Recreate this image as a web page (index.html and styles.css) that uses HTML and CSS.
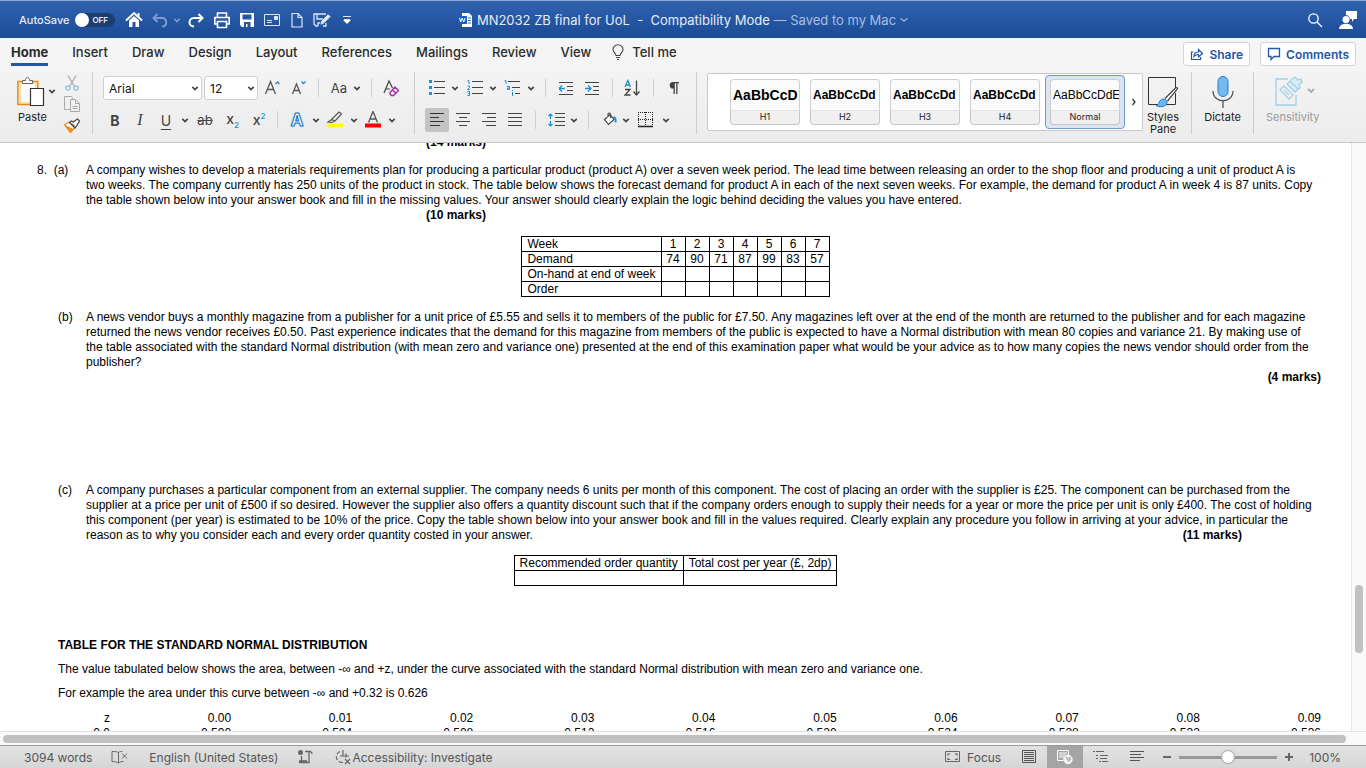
FILE: index.html
```html
<!DOCTYPE html>
<html lang="en">
<head>
    <meta charset="UTF-8">
    <meta name="viewport" content="width=device-width, initial-scale=1.0">
    <title>MN2032 ZB final for UoL</title>
    <link rel="stylesheet" href="styles.css">
</head>
<body>
    <svg class="defs" aria-hidden="true">
        <symbol id="chev" viewBox="0 0 8 8"><path d="M1.3 2.8 4 5.500 6.700 2.800" fill="none" stroke="currentColor" stroke-width="1.700"/></symbol>
    </svg>

    <!-- Title bar -->
    <header class="titlebar">
        <div class="quick">
            <label class="autosave">AutoSave <input type="checkbox" class="switch"><span class="track">OFF</span></label>
            <div class="quick-icons">
                <button aria-label="Home"><svg width="18" height="18" fill="none" stroke="#fff" stroke-width="2"><path d="M1 9.500 9 2l8 7.500M13.500 2v4"/><path d="M4 9.500 9 5l5 4.500V16h-3.500v-5h-3v5H4z" fill="#fff" stroke="none"/></svg></button>
                <button aria-label="Undo"><svg width="18" height="18" fill="none" stroke="#7d9bd0" stroke-width="2"><path d="M6.500 3 2.500 7l4 4M3 7h8.500c5 0 5 8.500-.5 8.500"/></svg></button>
                <button class="dim" aria-label="Undo list"><svg width="8" height="8"><use href="#chev"/></svg></button>
                <button aria-label="Redo"><svg width="18" height="18" fill="none" stroke="#fff" stroke-width="2"><path d="M11.500 3l4 4-4 4M15 7H7C1 7 1 15.500 7 15.500"/></svg></button>
                <button aria-label="Print"><svg width="18" height="18" fill="none" stroke="#fff" stroke-width="1.600"><path d="M4.500 6V2h9v4M4 13H1.800V6.500h14.400V13H14M4.500 10.500h9v6h-9z"/></svg></button>
                <button aria-label="Save"><svg width="18" height="18"><path d="M2 2h14v14H4l-2-2z" fill="#fff"/><path d="M4.500 3.500h9v5h-9zM6 11h6.500v5H9.500v-3H8v3H6z" fill="#2655a2"/></svg></button>
                <button aria-label="Mail"><svg width="18" height="18" fill="none" stroke="#dfe7f5"><path d="M1.500 3.500h15v11h-15zM4 9.500h5M4 11.500h5"/><path d="M11.500 5.500h3v3h-3z" fill="#dfe7f5"/></svg></button>
                <button aria-label="New"><svg width="18" height="18" fill="none" stroke="#dfe7f5" stroke-width="1.200"><path d="M4 2.500h6l4 4v9.500H4zM10 2.500v4h4"/></svg></button>
                <button aria-label="Edit"><svg width="20" height="18" fill="none" stroke="#dfe7f5" stroke-width="1.300"><path d="M14 3H2v10l2 2h2M5 3v5h6M6 15v-3h2M14 12v3h-3"/><path d="m8 14 1-4 7-7 3 2.500-7.500 7.500z" fill="#dfe7f5" stroke="#2655a2" stroke-width=".6"/></svg></button>
                <button aria-label="Customize"><svg width="8" height="10"><path d="M0 1.500h8M1 4.500h6" stroke="#dfe7f5"/><path d="M0 5h8L4 9z" fill="#fff"/></svg></button>
            </div>
        </div>
        <div class="doc-title">
            <svg width="15" height="16"><path d="M4 1h7l3 3v11H4z" fill="#fff"/><path d="M10 6h3M10 8.500h3M10 11h3" stroke="#2f6fc4"/><path d="M0 4h9v8H0z" fill="#1b5fbd"/><path d="m1.500 6 1.200 4 1.500-4 1.500 4L7.200 6" fill="none" stroke="#fff"/></svg>
            <span>MN2032 ZB final for UoL&nbsp; -&nbsp; Compatibility Mode <span class="saved">— Saved to my Mac</span></span>
            <svg class="saved" width="8" height="8" viewBox="0 0 8 8"><path d="M.5 2.500 4 5l3.500-2.500" fill="none" stroke="currentColor" stroke-width="1.300"/></svg>
        </div>
        <div class="title-right">
            <button aria-label="Search"><svg width="16" height="16" fill="none" stroke="#fff" stroke-width="1.300"><circle cx="6.500" cy="6.500" r="4.700"/><path d="m10 10 5 5"/></svg></button>
            <button aria-label="Account"><svg width="20" height="20" fill="#fff"><path d="M8 1h11v8h-3l-2 3V9h-2a4.500 4.500 0 0 0-4-4z"/><circle cx="8" cy="9.500" r="3.500"/><path d="M1 19c0-7 14-7 14 0z"/></svg></button>
        </div>
    </header>

    <!-- Tabs -->
    <div class="tabbar">
        <nav class="tabs">
            <a href="#" class="active">Home</a>
            <a href="#">Insert</a>
            <a href="#">Draw</a>
            <a href="#">Design</a>
            <a href="#">Layout</a>
            <a href="#">References</a>
            <a href="#">Mailings</a>
            <a href="#">Review</a>
            <a href="#">View</a>
            <a href="#" class="tell"><svg width="12" height="16" fill="none" stroke="#444" stroke-width="1.100"><path d="M4 11.500c0-2.500-3-3-3-6a5 4.700 0 0 1 10 0c0 3-3 3.500-3 6zM4 13.500h4M5 15.500h2"/></svg>Tell me</a>
        </nav>
        <div class="tab-actions">
            <button><svg width="14" height="14" fill="none" stroke="#2456a6" stroke-width="1.200"><path d="M3.500 5H1.500v7.500h9V10"/><path d="M4 9.500c0-3.500 2-4.500 4.500-4.500V2.500L12.500 6.500 8.500 10V7.500C6.500 7.500 5 8 4 9.500z"/></svg>Share</button>
            <button><svg width="14" height="14" fill="none" stroke="#2456a6" stroke-width="1.300"><path d="M1.500 1.500h11v8H7l-3 3v-3H1.500z"/></svg>Comments</button>
        </div>
    </div>

    <!-- Ribbon -->
    <div class="ribbon">
        <div class="group clipboard">
            <button class="big paste">
                <svg width="28" height="32" fill="none"><path d="M.8 5.500h20v23h-20z" fill="#fde3a7" stroke="#f08a1d" stroke-width="1.500"/><path d="M4 8h14v18H4z" fill="#fbfbfb"/><path d="M5.500 7.500v-3h3c0-4 4-4 4 0h3v3z" fill="#fff" stroke="#666"/><path d="M13.500 12.500h13v17h-13z" fill="#fff" stroke="#333" stroke-width="1.200"/></svg>
                <span>Paste</span>
            </button>
            <button class="paste-more" aria-label="Paste options"><svg width="8" height="8"><use href="#chev"/></svg></button>
            <div class="clip-tools">
                <button aria-label="Cut"><svg width="16" height="18" fill="none" stroke="#aaa" stroke-width="1.200"><path d="M4 1.500l6.500 11M12 1.500l-6.500 11"/><circle cx="4" cy="14" r="2.200" stroke="#86bfe6"/><circle cx="12" cy="14" r="2.200" stroke="#86bfe6"/></svg></button>
                <button aria-label="Copy"><svg width="18" height="18" fill="none" stroke="#aaa"><path d="M7 14.500H1.500v-13h7L10 4"/><path d="M7.500 4.500h5l4 4v8h-9zM12.500 4.500v4h4M9.500 11.500h5M9.500 13.500h5"/></svg></button>
                <button aria-label="Format painter"><svg width="18" height="18" fill="none"><path d="M1.500 8.500 7 6l5 5.500-4.500 5z" fill="#fff" stroke="#f08a1d" stroke-width="1.300"/><path d="m2 9 8.500 4-3 3.500z" fill="#f08a1d"/><path d="m6.500 6.500 5.500 5.500 1.500-2 3-5-2-2-4.500 3L8.500 5z" fill="#fff" stroke="#444" stroke-width="1.200"/><path d="m9 7.500 3 3" stroke="#444"/></svg></button>
            </div>
        </div>

        <div class="group font">
            <div class="row font-row1">
                <label class="combo"><select aria-label="Font"><option>Arial</option></select><svg width="8" height="8"><use href="#chev"/></svg></label>
                <label class="combo"><select aria-label="Font size"><option>12</option></select><svg width="8" height="8"><use href="#chev"/></svg></label>
                <button aria-label="Grow font"><svg width="18" height="18" fill="none" stroke="#555" stroke-width="1.300"><path d="M1.500 15 6.500 2.500 11.500 15M3 10.500h7"/><path d="M11.500 5 13.500 3l2 2" stroke="#1e8fd0"/></svg></button>
                <button aria-label="Shrink font"><svg width="18" height="18" fill="none" stroke="#555" stroke-width="1.300"><path d="M2.500 15 6.500 5l4 10M4 11.500h5"/><path d="m11.500 2.500 2 2 2-2" stroke="#1e8fd0"/></svg></button>
                <i class="sep"></i>
                <button class="case">Aa</button>
                <button aria-label="Case options"><svg width="8" height="8"><use href="#chev"/></svg></button>
                <i class="sep"></i>
                <button aria-label="Clear formatting"><svg width="18" height="18" fill="none" stroke="#444" stroke-width="1.200"><path d="M2 14 7 2l3.500 7M3.500 10h4.500"/><path d="m8 13.500 5-5.500 3.500 3.500-5 5H9.500L8 15zM10.500 11l3.500 3.500" stroke="#a32fa8" stroke-width="1.400"/></svg></button>
            </div>
            <div class="row font-row2">
                <button><b>B</b></button>
                <button class="italic">I</button>
                <button class="underline">U</button>
                <button aria-label="Underline options"><svg width="8" height="8"><use href="#chev"/></svg></button>
                <button class="strike">ab</button>
                <button class="script">x<sub>2</sub></button>
                <button class="script">x<sup>2</sup></button>
                <i class="sep"></i>
                <button class="effects">A</button>
                <button aria-label="Effects options"><svg width="8" height="8"><use href="#chev"/></svg></button>
                <button aria-label="Highlight"><svg width="18" height="18" fill="none" stroke="#555"><path d="m2 11 3-2 8-8 2.500 2L9 10l-3 1.500zM5.500 8 9 10.500" stroke-width="1.200"/><path d="M1 14.500h16" stroke="#ff0" stroke-width="4"/></svg></button>
                <button aria-label="Highlight options"><svg width="8" height="8"><use href="#chev"/></svg></button>
                <button aria-label="Font color"><svg width="18" height="18" fill="none" stroke="#555" stroke-width="1.300"><path d="M4.500 11.500 9 .5l4.500 11M6 8h6"/><path d="M1 14.500h16" stroke="#f00" stroke-width="4"/></svg></button>
                <button aria-label="Color options"><svg width="8" height="8"><use href="#chev"/></svg></button>
            </div>
        </div>

        <div class="group para">
            <div class="row para-row1">
                <button aria-label="Bullets"><svg width="16" height="16"><path d="M0 0h3v3H0zM0 6h3v3H0zM0 12h3v3H0z" fill="#1e8fd0"/><path d="M5 1.500h11M5 7.500h11M5 13.500h11" stroke="#444"/></svg></button>
                <button aria-label="Bullet options"><svg width="8" height="8"><use href="#chev"/></svg></button>
                <button aria-label="Numbering"><svg width="16" height="16" fill="none" stroke="#1e8fd0"><path d="M.5 1 2 .5V4M.5 6h2v1.500L.5 9.500H3M.5 11.500h2v4h-2M1 13.500h1.500"/><path d="M5 1.500h11M5 7.500h11M5 13.500h11" stroke="#444"/></svg></button>
                <button aria-label="Numbering options"><svg width="8" height="8"><use href="#chev"/></svg></button>
                <button aria-label="Multilevel list"><svg width="16" height="16" fill="none" stroke="#1e8fd0"><path d="M.5 1 2 .5V4M3 6.500h2.500v3H3.500V8h2M8.500 10v1M8.500 12v4"/><path d="M4 1.500h12M8 7.500h8M11 13.500h5" stroke="#444"/></svg></button>
                <button aria-label="Multilevel options"><svg width="8" height="8"><use href="#chev"/></svg></button>
                <i class="sep"></i>
                <button aria-label="Decrease indent"><svg width="14" height="14" fill="none" stroke="#444"><path d="M0 1.500h14M8 5.500h6M8 9.500h6M0 13.500h14"/><path d="M0 7.500h6M3 4.500l-3 3 3 3" stroke="#1e8fd0" stroke-width="1.300"/></svg></button>
                <button aria-label="Increase indent"><svg width="14" height="14" fill="none" stroke="#444"><path d="M0 1.500h14M8 5.500h6M8 9.500h6M0 13.500h14"/><path d="M0 7.500h6M3 4.500l3 3-3 3" stroke="#1e8fd0" stroke-width="1.300"/></svg></button>
                <i class="sep"></i>
                <button aria-label="Sort"><svg width="16" height="18" fill="none" stroke="#444" stroke-width="1.300"><path d="M1 8 3.800 1.500 6.500 8M2 6h4" stroke="#1e8fd0"/><path d="M1 10.500h5L1 16h5.500M12.500 1.500V16M9.500 12.500l3 3.500 3-3.500"/></svg></button>
                <i class="sep"></i>
                <button class="pilcrow" aria-label="Show marks"><svg width="12" height="14"><path d="M4.500 1H11v1.300H9.500V13H8.200V2.300H6.800V13H5.500V7.500a3.250 3.250 0 0 1-1-6.500z" fill="#444"/></svg></button>
            </div>
            <div class="row para-row2">
                <button class="on" aria-label="Align left"><svg width="14" height="14" stroke="#333"><path d="M0 .5h14M0 4.500h9M0 8.500h14M0 12.500h10"/></svg></button>
                <button aria-label="Align center"><svg width="14" height="14" stroke="#444"><path d="M0 .5h14M3 4.500h8M0 8.500h14M3 12.500h8"/></svg></button>
                <button aria-label="Align right"><svg width="14" height="14" stroke="#444"><path d="M0 .5h14M5 4.500h9M0 8.500h14M4 12.500h10"/></svg></button>
                <button aria-label="Justify"><svg width="14" height="14" stroke="#444"><path d="M0 .5h14M0 4.500h14M0 8.500h14M0 12.500h14"/></svg></button>
                <i class="sep"></i>
                <button aria-label="Line spacing"><svg width="17" height="14" fill="none" stroke="#444"><path d="M7 .5h10M7 4.500h10M7 8.500h10M7 12.500h10"/><path d="M2.500 1v5M.5 3l2-2 2 2M2.500 8v5M.5 11l2 2 2-2" stroke="#1e8fd0" stroke-width="1.200"/></svg></button>
                <button aria-label="Spacing options"><svg width="8" height="8"><use href="#chev"/></svg></button>
                <i class="sep"></i>
                <button aria-label="Shading"><svg width="16" height="16" fill="none" stroke="#444" stroke-width="1.200"><path d="M2.500 7.500 8 2.500l4 5-5.500 5zM6 5V2.500C6 .5 8.500.5 8.500 2.500V6" fill="#fff"/><path d="M11.500 5c2 .5 2.500 2 2 5.500" stroke="#1e8fd0" stroke-width="2"/></svg></button>
                <button aria-label="Shading options"><svg width="8" height="8"><use href="#chev"/></svg></button>
                <button aria-label="Borders"><svg width="16" height="16" fill="none" stroke="#222"><path d="M0 .5h15M0 7.500h15M.5 0v14M7.500 0v14M14.500 0v14" stroke-dasharray="1 1"/><path d="M0 14.500h15" stroke-width="1.500"/></svg></button>
                <button aria-label="Border options"><svg width="8" height="8"><use href="#chev"/></svg></button>
            </div>
        </div>

        <div class="group styles-group">
            <div class="gallery">
                <button class="style h1"><span>AaBbCcD</span><small>H1</small></button>
                <button class="style"><span>AaBbCcDd</span><small>H2</small></button>
                <button class="style"><span>AaBbCcDd</span><small>H3</small></button>
                <button class="style"><span>AaBbCcDd</span><small>H4</small></button>
                <button class="style normal"><span>AaBbCcDdE</span><small>Normal</small></button>
                <button class="more" aria-label="More styles"><svg width="6" height="8"><path d="m1.500 1 2.500 3-2.500 3" fill="none" stroke="#333" stroke-width="1.300"/></svg></button>
            </div>
            <button class="big pane">
                <svg width="32" height="32" fill="none"><path d="M1.500 1.500h27v27h-27z" stroke="#333"/><path d="M30 11 18 23l2 2.500 10-10z" fill="#fff"/><path d="M18 22.500 28.500 12c2-1 2.500 0 1.500 1.500L20.500 25" fill="#fff" stroke="#444" stroke-width="1.200"/><path d="M9 29.500c4-.5 2-6 7.500-6.500 5 .5 4.500 7-1 7.500-3 .3-5 0-6.500-1z" fill="#6fb8ee" stroke="#1777c4"/></svg>
                <span>Styles<br>Pane</span>
            </button>
        </div>

        <div class="group dictate">
            <button class="big">
                <svg width="24" height="32" fill="none"><rect x="7" y=".5" width="10" height="20" rx="5" fill="#74b9ee" stroke="#1e7fd0"/><path d="M2 15c0 13 20 13 20 0M12 25v7" stroke="#555" stroke-width="1.300"/></svg>
                <span>Dictate</span>
            </button>
        </div>

        <div class="group sensitivity">
            <button class="big muted">
                <svg width="44" height="32" fill="none" stroke="#9fd0ea" stroke-width="1.300"><path d="M17 3H5v26h20V19"/><path d="m9 14 4-4 9 9-4 4zM13 14l5 5" /><path d="m16 8 3-3 8 8-3 3zM20 4l4-3 3 3 3-1 1 3-3 3 1 3-2 1" fill="#d8ecf6"/><path d="m37 13 3 3 3-3" stroke="#aaa" stroke-width="1.800"/></svg>
                <span>Sensitivity</span>
            </button>
        </div>
    </div>

    <!-- Document -->
    <main class="workspace">
        <article class="page">
            <p class="tabbed"><b>(14 marks)</b></p>

            <section class="question first">
                <div class="label">8.&nbsp; (a)</div>
                <div>
                    <p class="body">A company wishes to develop a materials requirements plan for producing a particular product (product A) over a seven week period. The lead time between releasing an order to the shop floor and producing a unit of product A is two weeks. The company currently has 250 units of the product in stock. The table below shows the forecast demand for product A in each of the next seven weeks. For example, the demand for product A in week 4 is 87 units. Copy the table shown below into your answer book and fill in the missing values. Your answer should clearly explain the logic behind deciding the values you have entered.</p>
                    <p class="indent"><b>(10 marks)</b></p>
                </div>
            </section>

            <table class="boxed weeks">
                <tr><th>Week</th><td>1</td><td>2</td><td>3</td><td>4</td><td>5</td><td>6</td><td>7</td></tr>
                <tr><th>Demand</th><td>74</td><td>90</td><td>71</td><td>87</td><td>99</td><td>83</td><td>57</td></tr>
                <tr><th>On-hand at end of week</th><td></td><td></td><td></td><td></td><td></td><td></td><td></td></tr>
                <tr><th>Order</th><td></td><td></td><td></td><td></td><td></td><td></td><td></td></tr>
            </table>

            <section class="question">
                <div class="label sub">(b)</div>
                <div>
                    <p class="body">A news vendor buys a monthly magazine from a publisher for a unit price of £5.55 and sells it to members of the public for £7.50. Any magazines left over at the end of the month are returned to the publisher and for each magazine returned the news vendor receives £0.50. Past experience indicates that the demand for this magazine from members of the public is expected to have a Normal distribution with mean 80 copies and variance 21. By making use of the table associated with the standard Normal distribution (with mean zero and variance one) presented at the end of this examination paper what would be your advice as to how many copies the news vendor should order from the publisher?</p>
                    <p class="right"><b>(4 marks)</b></p>
                </div>
            </section>

            <section class="question last">
                <div class="label sub">(c)</div>
                <div>
                    <p class="body">A company purchases a particular component from an external supplier. The company needs 6 units per month of this component. The cost of placing an order with the supplier is £25. The component can be purchased from the supplier at a price per unit of £500 if so desired. However the supplier also offers a quantity discount such that if the company orders enough to supply their needs for a year or more the price per unit is only £400. The cost of holding this component (per year) is estimated to be 10% of the price. Copy the table shown below into your answer book and fill in the values required. Clearly explain any procedure you follow in arriving at your advice, in particular the reason as to why you consider each and every order quantity costed in your answer. <b class="inline-marks">(11 marks)</b></p>
                </div>
            </section>

            <table class="boxed costs">
                <tr><th>Recommended order quantity</th><th>Total cost per year (£, 2dp)</th></tr>
                <tr><td></td><td></td></tr>
            </table>

            <section class="appendix">
                <p><b>TABLE FOR THE STANDARD NORMAL DISTRIBUTION</b></p>
                <p>The value tabulated below shows the area, between -∞ and +z, under the curve associated with the standard Normal distribution with mean zero and variance one.</p>
                <p>For example the area under this curve between -∞ and +0.32 is 0.626</p>
                <table class="normal-table">
                    <tr><th>z</th><th>0.00</th><th>0.01</th><th>0.02</th><th>0.03</th><th>0.04</th><th>0.05</th><th>0.06</th><th>0.07</th><th>0.08</th><th>0.09</th></tr>
                    <tr><td>0.0</td><td>0.500</td><td>0.504</td><td>0.508</td><td>0.512</td><td>0.516</td><td>0.520</td><td>0.524</td><td>0.528</td><td>0.532</td><td>0.536</td></tr>
                </table>
            </section>
        </article>
        <div class="vscroll"><div class="thumb"></div></div>
    </main>
    <div class="hscroll"><div class="thumb"></div></div>

    <!-- Status bar -->
    <footer class="status">
        <div class="status-left">
            <span class="words">3094 words</span>
            <svg class="proof" width="18" height="14" fill="none" stroke="#666"><path d="M7.500 13V2.500c-1.500-1-4-1-6.500-1v10c2.500 0 5 .5 6.500 1.500 1-1 3-1.500 5-1.500M7.500 2.500c1-1 2.500-1 4-1M11 3.500l5 5M16 3.500l-5 5"/></svg>
            <span class="lang">English (United States)</span>
            <svg class="macro" width="16" height="14" fill="none" stroke="#666" stroke-width="1.300"><circle cx="2.500" cy="2.500" r="2.500" fill="#666" stroke="none"/><path d="M3.500 6v5M1 12.500h10V3c0-2 3-2 3 1M7 1.500h6M1 11h8" /></svg>
            <svg class="access" width="18" height="16" fill="none" stroke="#666" stroke-width="1.200"><path d="M6 2.500A5.500 5.500 0 1 0 10 13" stroke-dasharray="4 2"/><path d="M9 1v6M6 7h9M12 4.500v4M11 10l5 5M16 10l-5 5"/></svg>
            <span>Accessibility: Investigate</span>
        </div>
        <div class="status-right">
            <button class="focus"><svg width="16" height="12" fill="none" stroke="#666"><path d="M.5.5h14v10H.5z"/><path d="M5 3H3v1.500M10 3h2v1.500M5 8.500H3V7M10 8.500h2V7" stroke-width="1.200"/></svg>Focus</button>
            <button class="view" aria-label="Print layout"><svg width="14" height="14" fill="none" stroke="#555"><path d="M.5.500h13v12H.5zM2 2.500h10M2 4.500h10M2 6.500h10M2 8.500h10M2 10.500h10"/></svg></button>
            <button class="view current" aria-label="Web layout"><svg width="16" height="16" fill="none" stroke="#fff"><path d="M6 11.500H.5V1.500h11V6M2 4h8M2 6h7M2 8h5"/><circle cx="11" cy="10.500" r="4.200" fill="#eee"/><path d="M9 8.500l2 1v2M13 8v2.500l-1.500 2" stroke="#888"/></svg></button>
            <button class="view" aria-label="Outline"><svg width="16" height="12" fill="none" stroke="#666"><path d="M0 .5h2M3 .5h8M3 4.500h2M7 4.500h8M3 7.500h2M7 7.500h7M6 10.500h2M9 10.500h6"/></svg></button>
            <button class="view" aria-label="Draft"><svg width="14" height="12" fill="none" stroke="#555"><path d="M0 .5h14M0 3.500h11M0 6.500h14M0 9.500h10"/></svg></button>
            <button class="step" aria-label="Zoom out"><svg width="8" height="8"><path d="M0 4h8" stroke="#666" stroke-width="2"/></svg></button>
            <input type="range" aria-label="Zoom" min="0" max="100" value="50">
            <button class="step" aria-label="Zoom in"><svg width="8" height="8"><path d="M0 4h8M4 0v8" stroke="#666" stroke-width="2"/></svg></button>
            <span class="percent">100%</span>
        </div>
    </footer>
</body>
</html>
```
FILE: styles.css
```css
:root {
    --blue: #2456a6;
    --ui: Inter, "Liberation Sans", sans-serif;
    --doc: "Liberation Sans", Arial, sans-serif;
}
* {
    box-sizing: border-box;
}
body {
    margin: 0;
    height: 100vh;
    display: flex;
    flex-direction: column;
    overflow: hidden;
    background: #fff;
    font-family: var(--ui);
    font-size: 13px;
    color: #2b2b2b;
}
button {
    display: flex;
    align-items: center;
    justify-content: center;
    padding: 0;
    border: none;
    background: none;
    font: inherit;
    color: inherit;
}
svg {
    display: block;
    flex: none;
}
p {
    margin: 0;
}
.defs {
    position: absolute;
    width: 0;
    height: 0;
}

/* title bar */
.titlebar {
    flex: none;
    display: grid;
    grid-template-columns: 1fr auto 1fr;
    align-items: center;
    height: 38px;
    border-top: 1px solid #8fa9d3;
    background: linear-gradient(#2f62b0, #1c4b95);
    color: #e6ecf7;
}
.quick {
    display: flex;
    align-items: center;
    padding-left: 19px;
}
.autosave {
    display: flex;
    align-items: center;
    width: 102px;
    font-size: 11px;
    font-weight: 500;
}
.switch {
    appearance: none;
    position: relative;
    width: 14px;
    height: 14px;
    margin: 0 -14px 0 6px;
    border-radius: 50%;
    background: #fff;
    z-index: 1;
}
.track {
    width: 40px;
    height: 14px;
    padding-left: 17px;
    border-radius: 7px;
    background: #1d3c70;
    font-size: 8px;
    line-height: 14px;
    font-weight: 600;
}
.quick-icons {
    display: grid;
    grid-template-columns: 26px 26px 8px 30px 22px 28px 22px 28px 22px 28px;
}
.quick-icons .dim {
    color: #7d9bd0;
}
.doc-title {
    display: flex;
    align-items: center;
    gap: 4px;
}
.saved {
    color: #a9bde0;
}
.title-right {
    display: flex;
    justify-content: flex-end;
    gap: 15px;
    padding-right: 8px;
}

/* tabs */
.tabbar {
    flex: none;
    display: flex;
    justify-content: space-between;
    height: 34px;
    padding: 0 10px 0 11px;
    background: #f5f5f5;
}
.tabs {
    display: flex;
    gap: 24px;
}
.tabs a {
    height: 28px;
    padding-top: 6px;
    line-height: 17px;
    font-weight: 500;
    color: #2b2b2b;
    text-decoration: none;
}
.tabs .active {
    font-weight: 700;
    border-bottom: 3px solid var(--blue);
}
.tabs .tell {
    display: flex;
    gap: 8px;
    margin-left: -3px;
}
.tab-actions {
    display: flex;
    gap: 10px;
    padding-top: 4px;
}
.tab-actions button {
    height: 24px;
    padding: 0 6px;
    gap: 5px;
    border: 1px solid #d6d6d6;
    border-radius: 3px;
    background: #fff;
    font-size: 12px;
    font-weight: 600;
    color: var(--blue);
}

/* ribbon */
.ribbon {
    flex: none;
    display: flex;
    height: 71px;
    padding-bottom: 8px;
    border-bottom: 1px solid #c6c6c6;
    background: linear-gradient(#f3f3f3, #ececec);
    color: #444;
}
.group {
    flex: none;
    border-right: 1px solid #cdcdcd;
}
.row {
    display: grid;
    align-items: center;
    height: 32px;
}
.row button {
    height: 24px;
}
.sep {
    justify-self: center;
    width: 1px;
    height: 18px;
    background: #cfcfcf;
}
.big {
    flex-direction: column;
    justify-content: flex-start;
    gap: 3px;
    height: 62px;
    padding-top: 4px;
    font-size: 11px;
    line-height: 12px;
    color: #222;
}
.muted {
    color: #999;
}
.clipboard {
    display: flex;
    width: 93px;
}
.paste {
    width: 31px;
    margin-left: 17px;
}
.paste svg {
    align-self: flex-start;
}
.paste-more {
    width: 8px;
    height: 38px;
    margin-right: 7px;
}
.clip-tools {
    display: grid;
    grid-template-rows: repeat(3, 21px);
    align-items: center;
    width: 18px;
}
.font {
    width: 322px;
    padding-left: 10px;
}
.font-row1 {
    grid-template-columns: 101px 54px 29px 24px 14px 28px 8px 20px 20px;
}
.font-row2 {
    grid-template-columns: 24px 26px 26px 12px 28px 27px 26px 10px 30px 8px 30px 8px 30px 8px;
    font-size: 14px;
}
.combo {
    position: relative;
    height: 24px;
}
.combo:first-child {
    margin-right: 2px;
}
.combo select {
    appearance: none;
    width: 100%;
    height: 24px;
    padding: 0 5px;
    border: 1px solid #cfcfcf;
    border-radius: 3px;
    background: #fff;
    font: 12px var(--ui);
    color: #111;
}
.combo svg {
    position: absolute;
    right: 3px;
    top: 8px;
}
.case {
    font-size: 13px;
}
.italic {
    font-family: "Liberation Serif", serif;
    font-style: italic;
    font-size: 16px;
}
.underline {
    text-decoration: underline;
    text-decoration-thickness: 1px;
    text-underline-offset: 3px;
}
.strike {
    font-size: 13px;
    text-decoration: line-through;
}
.script {
    display: block;
    font-weight: 500;
    line-height: 16px;
}
.script sub,
.script sup {
    font-size: 8px;
    line-height: 8px;
    color: #1e8fd0;
}
.effects {
    font-size: 17px;
    font-weight: 700;
    color: #fff;
    -webkit-text-stroke: 1px #1673c0;
    text-shadow: 0 0 2px #4aa3e4;
}
.para {
    width: 282px;
    padding-left: 10px;
}
.para-row1 {
    grid-template-columns: 24px 12px 28px 8px 30px 8px 20px 22px 30px 10px 30px 12px 30px;
}
.para-row2 {
    grid-template-columns: 24px 28px 24px 28px 13px 28px 8px 20px 24px 8px 32px 8px;
}
.on {
    border-radius: 2px;
    background: #c3c3c3;
}
.styles-group {
    display: flex;
    width: 495px;
    padding-left: 10px;
}
.gallery {
    display: flex;
    align-items: center;
    height: 58px;
    margin-top: 1px;
    padding-left: 17px;
    border: 1px solid #c9c9c9;
    border-radius: 2px;
    background: #fff;
}
.style {
    display: block;
    width: 80px;
    height: 54px;
    padding: 3px 4px;
    border: 1px solid transparent;
    border-radius: 4px;
    text-align: center;
}
.style span {
    display: block;
    height: 32px;
    overflow: hidden;
    padding-left: 2px;
    border: 1px solid #cfcfcf;
    border-bottom-color: #e2e2e2;
    border-radius: 4px 4px 0 0;
    background: #fbfbfb;
    font: bold 12px/30px var(--doc);
    text-align: left;
    color: #000;
}
.style small {
    display: block;
    height: 14px;
    border: 1px solid #c6c6c6;
    border-top: none;
    border-radius: 0 0 4px 4px;
    background: #f0f0f0;
    font-size: 9px;
    line-height: 12px;
    color: #222;
}
.h1 span {
    font-size: 14px;
}
.normal {
    border-color: #6f97d4;
    background: #dde5f4;
}
.normal span {
    font-weight: 400;
}
.more {
    width: 17px;
    height: 54px;
}
.pane {
    width: 38px;
    margin-left: 1px;
}
.dictate {
    display: flex;
    justify-content: center;
    width: 62px;
}
.sensitivity {
    padding-left: 12px;
    border: none;
}

/* document */
.workspace {
    flex: 1;
    min-height: 0;
    display: flex;
}
.page {
    flex: 1;
    overflow: hidden;
    padding: 0 30px;
    font-family: var(--doc);
    font-size: 12px;
    line-height: 15px;
    color: #000;
}
.tabbed {
    margin-top: -8px;
    padding-left: 396px;
}
.body {
    padding-right: 6px;
}
.indent {
    padding-left: 340px;
}
.right {
    text-align: right;
}
.question {
    display: grid;
    grid-template-columns: 56px 1fr;
}
.first {
    margin-top: 13px;
}
.label {
    padding-left: 7px;
}
.sub {
    padding-left: 28px;
}
.last {
    margin-top: 98px;
}
.inline-marks {
    float: right;
    margin-right: 73px;
}
.boxed {
    margin: 13px auto;
    border-collapse: collapse;
}
.boxed th,
.boxed td {
    height: 15px;
    padding: 0 5px;
    border: 1px solid #000;
    font-weight: 400;
    line-height: 14px;
    text-align: left;
}
.weeks td {
    width: 24px;
    padding: 0;
    text-align: center;
}
.costs {
    margin-top: 12px;
}
.appendix {
    margin-top: 52px;
    padding-left: 28px;
}
.appendix p {
    margin-bottom: 9px;
}
.normal-table {
    width: 100%;
    margin-top: 10px;
    table-layout: fixed;
    border-collapse: collapse;
}
.normal-table th,
.normal-table td {
    padding: 0;
    font-weight: 400;
    text-align: right;
}
.normal-table th:first-child {
    width: 52px;
}
.vscroll {
    width: 15px;
    padding: 442px 3px 0;
    border-left: 1px solid #e4e4e4;
    background: #fafafa;
}
.thumb {
    border-radius: 4px;
    background: #c1c1c1;
}
.vscroll .thumb {
    width: 8px;
    height: 68px;
}
.hscroll {
    flex: none;
    height: 14px;
    padding: 3px 20px 0 3px;
    border-top: 1px solid #e4e4e4;
    background: #fafafa;
}
.hscroll .thumb {
    height: 8px;
}

/* status bar */
.status {
    flex: none;
    display: flex;
    justify-content: space-between;
    height: 23px;
    border-top: 1px solid #9a9a9a;
    background: linear-gradient(#e2e2e2, #d6d6d6);
    font-size: 12px;
    color: #555;
}
.status-left,
.status-right {
    display: flex;
    align-items: center;
}
.status-left {
    padding-left: 24px;
}
.words {
    margin-right: 19px;
}
.proof,
.lang,
.macro {
    margin-right: 20px;
}
.status-right {
    padding-right: 25px;
}
.focus {
    gap: 6px;
    margin-right: 10px;
}
.view {
    width: 36px;
    height: 22px;
}
.current {
    background: #a5a5a5;
}
.step {
    width: 24px;
    height: 22px;
}
.status input {
    appearance: none;
    width: 98px;
    height: 12px;
    margin: 0;
    background: linear-gradient(#999, #999) center / 100% 3px no-repeat;
}
.status input::-webkit-slider-thumb {
    appearance: none;
    width: 12px;
    height: 12px;
    border-radius: 50%;
    background: #fff;
    box-shadow: 0 0 1px 1px #aaa;
}
.percent {
    margin-left: 8px;
}
```
